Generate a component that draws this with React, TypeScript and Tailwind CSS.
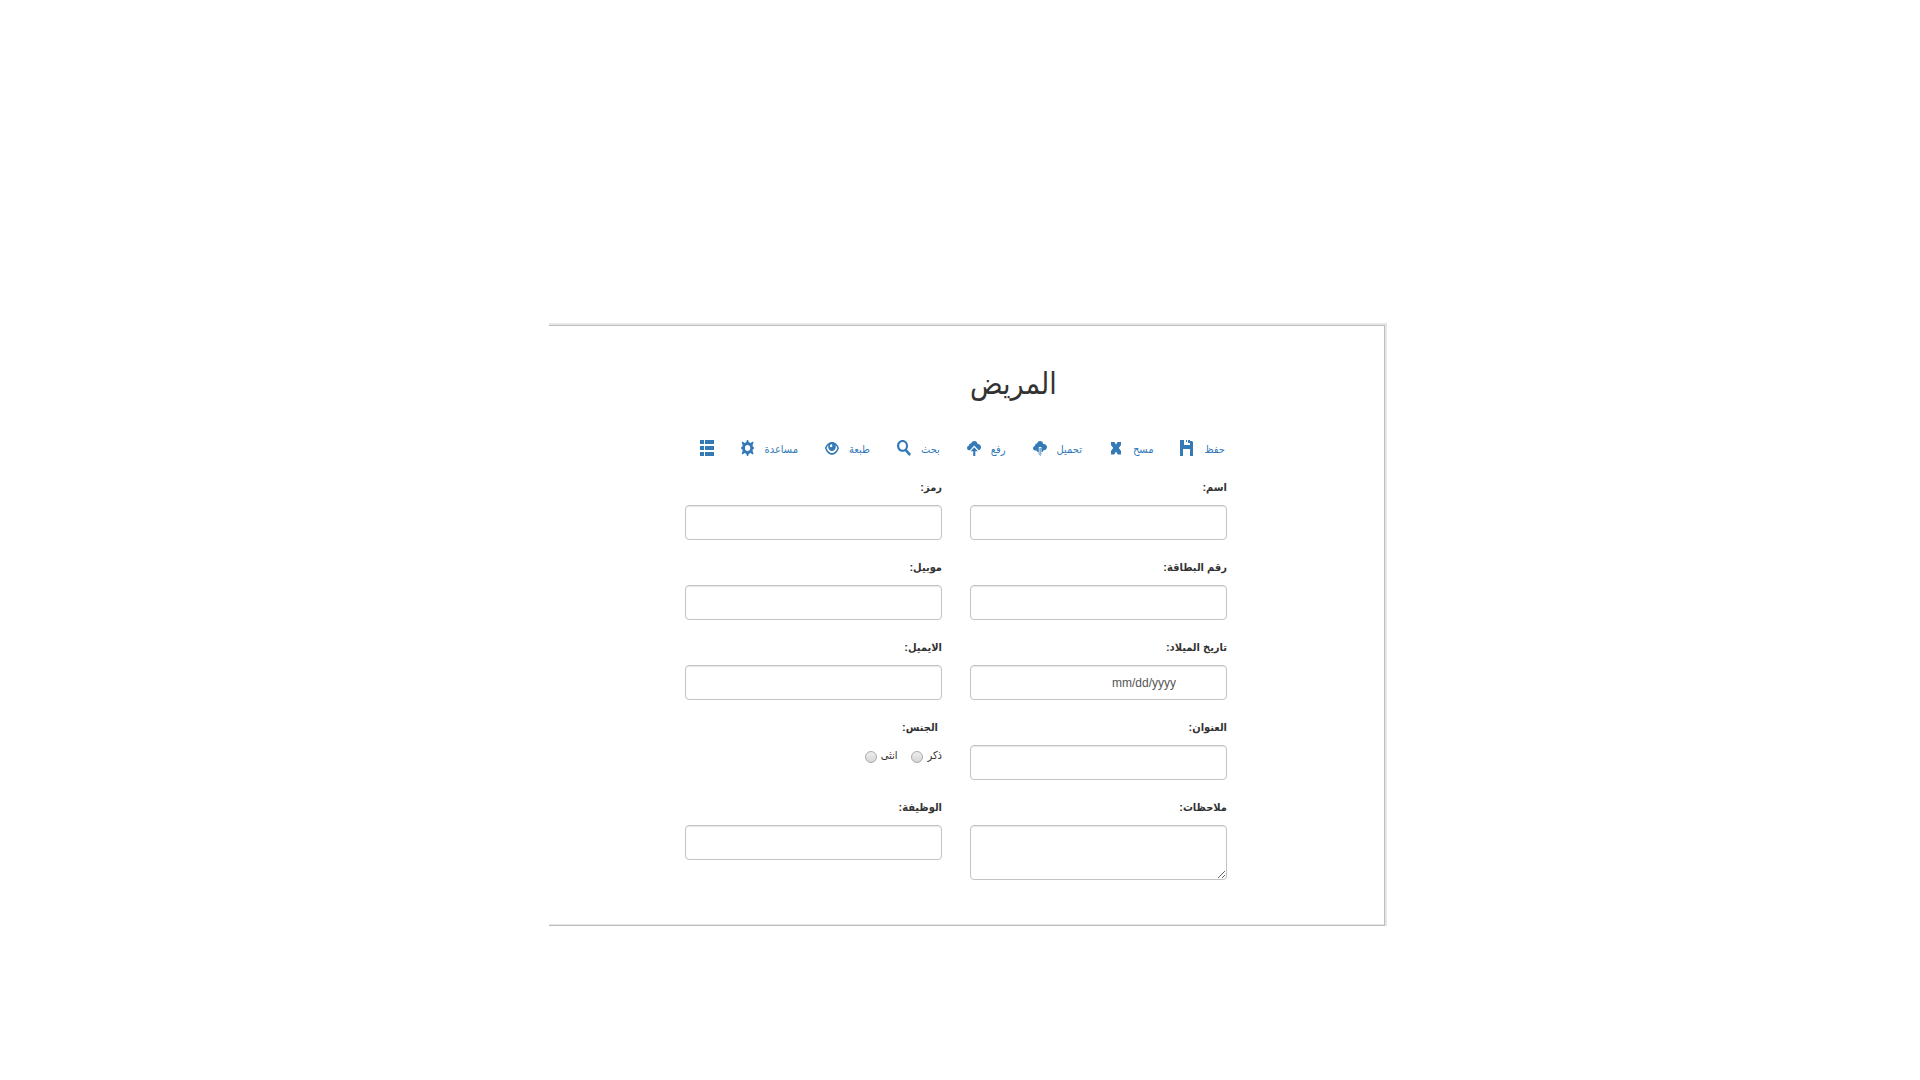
import type { ReactNode } from 'react';

const control =
  'block w-full rounded border border-[#c4c4c4] bg-white px-3 text-sm text-[#333] shadow-[inset_0_1px_1px_rgba(0,0,0,0.1)] outline-none focus:border-[#66afe9]';

function Glyph({ children }: { children: ReactNode }) {
  return (
    <svg viewBox="0 0 14 16" className="h-4 w-3.5 shrink-0" fill="currentColor" aria-hidden="true">
      {children}
    </svg>
  );
}

const tools: { label: string; icon: ReactNode }[] = [
  { label: 'حفظ', icon: <path d="M0 0h4v5h6V1h2l1 1v14h-3V9H3v7H0zM6 0h1v2H6zM8 0h2v3H8z" /> },
  { label: 'مسح', icon: <path d="M2 2h3.500L7 4.800 8.500 2H12v3L9.800 8l2.200 3v3.500H8.800L7 11.500 5.200 14.500H2V11l2.200-3L2 5z" /> },
  { label: 'تحميل', icon: <path fillRule="evenodd" d="M4 3.500C4.500 1.800 5.700 1 7 1c1.800 0 3 1.300 3.200 2.900C12.500 3.700 14 5.200 14 7c0 1.900-1.300 3.200-3 3.200h-.500L7.300 16 3.500 10.500H2.200C.9 10.300 0 9.400 0 8.200c0-1.300.9-2.200 2-2.300C1.900 4.500 2.800 3.500 4 3.500zM5.800 7v5H4.900l2.300 3 2.300-3H8.400V7z M6.600 8h1v6h-1z" /> },
  { label: 'رفع', icon: <path d="M4 3.500C4.700 1.800 6 1 7.300 1c2 0 3.200 1.400 3.300 3.100C12.800 4.200 14 5.600 14 7.300c0 1.600-.9 2.700-2.300 2.900L7.200 5.600 3 10.200H2C.8 9.900 0 9.100 0 8c0-1.200.8-2 1.900-2.200C1.900 4.400 2.700 3.500 4 3.500zM7.200 7.300l3.600 4H8.300V16H6.200v-4.700H3.700z" /> },
  { label: 'بحث', icon: <path fillRule="evenodd" d="M5.700 0C8.700 0 11 2.500 11 5.800c0 1.500-.3 2.600-1 3.600l4 4.600-1.700 2-4.200-4.800c-.7.400-1.500.6-2.400.600C2.600 11.800 0 9.200 0 5.900S2.600 0 5.700 0zm0 2C3.700 2 2.200 3.700 2.200 5.900s1.500 3.800 3.500 3.800S9 8.100 9 5.900 7.600 2 5.700 2z" /> },
  {
    label: 'طبعة',
    icon: <path fillRule="evenodd" d="M0 8.200C1.300 4.300 3.900 2 7 2s5.700 2.300 7 6.200C12.600 12 10.100 14.800 7 14.800S1.400 12 0 8.200zm1.600 0C2.800 11.100 4.700 13 7 13s4.200-1.900 5.400-4.800c-.5-1.300-1.200-2.300-2-3.100.3.700.4 1.200.4 2 0 2.300-1.700 4-3.800 4S3.200 9.400 3.200 7.100c0-.8.100-1.400.4-2-.9.700-1.500 1.800-2 3.100zM5 5.500c-.2 1 .1 1.700 1 1.700.9.100 1.400-.5 1.400-1.400C7.400 4.900 6.900 4.300 6.300 4.300 5.700 4.300 5.200 4.700 5 5.500z" />,
  },
  {
    label: 'مساعدة',
    icon: <path fillRule="evenodd" d="m6 0 1 0 1 2.300 1.500.6L12 1.500l.5 1-1 2.700.6 1.500L13 7.500v1l-.9.800-.6 1.500 1 2.700-.9 1-2.100-1.400-1.500.6L7 16H6l-.8-2.300-1.500-.6-2.200 1.400-.8-1 1-2.700-.6-1.500L0 8.500v-1l1.100-.8.6-1.500-1-2.700.8-1 2.200 1.400 1.500-.6zM6.600 5C5 5 3.900 6.300 3.900 8s1.100 3 2.700 3 2.700-1.300 2.700-3S8.200 5 6.600 5z" />,
  },
];

function Field({ id, label, children }: { id: string; label: string; children?: ReactNode }) {
  return (
    <div className="min-h-20">
      <label htmlFor={id} className="mb-2 block h-5 text-[11px] leading-5 font-bold">
        {label}:
      </label>
      {children ?? <input id={id} name={id} type="text" className={control + ' h-[35px]'} />}
    </div>
  );
}

function Choice({ id, label }: { id: string; label: string }) {
  return (
    <div className="flex items-center gap-1">
      <label htmlFor={id} className="text-[11px] leading-5">{label}</label>
      <input
        id={id}
        name="gender"
        type="radio"
        value={id}
        className="mt-1 size-3 appearance-none rounded-full border border-[#aaa] bg-linear-to-b from-[#eee] to-[#d6d6d6] checked:border-4 checked:border-[#337ab7]"
      />
    </div>
  );
}

export default function App() {
  return (
    <main
      dir="rtl"
      className="min-h-screen bg-white px-4 pt-[323px] pb-10 font-['Liberation_Sans','DejaVu_Sans_Condensed','DejaVu_Sans',sans-serif] text-[#333]"
    >
      <div className="mx-auto w-full max-w-[854px] pl-4">
        <section className="border-t-2 border-r-2 border-[#e6e6e6]">
          <form className="border-y border-r border-[#bdbdbd] pt-8 pr-[157px] pb-[45px] pl-[136px] shadow-[inset_0_-1px_0_#e6e6e6]">
            <div className="grid grid-cols-2 gap-7">
              <h1 className="text-left text-[30px] leading-[52px] font-normal">المريض</h1>
            </div>
            <nav className="mt-7 flex h-5 items-center gap-[27px] pr-0.5 text-[#337ab7]">
              {tools.map((tool) => (
                <a key={tool.label} href="#" className="flex items-center gap-2.5 text-[11px] leading-5 whitespace-nowrap">
                  <span className="pt-0.5">{tool.label}</span>
                  <Glyph>{tool.icon}</Glyph>
                </a>
              ))}
              <a href="#" aria-label="قائمة">
                <Glyph>
                  <path d="M0 0h4v4H0zM5 0h9v4H5zM0 6h4v4H0zM5 6h9v4H5zM0 12h4v4H0zM5 12h9v4H5z" />
                </Glyph>
              </a>
            </nav>
            <div className="mt-[19px] grid grid-cols-2 gap-x-7">
              <Field id="name" label="اسم" />
              <Field id="code" label="رمز" />
              <Field id="card" label="رقم البطاقة" />
              <Field id="mobile" label="موبيل" />
              <Field id="birth" label="تاريخ الميلاد">
                <input
                  id="birth"
                  name="birth"
                  type="text"
                  dir="ltr"
                  placeholder="mm/dd/yyyy"
                  className="block h-[35px] w-full rounded border border-[#c4c4c4] bg-white pr-[50px] pl-3 text-right text-xs shadow-[inset_0_1px_1px_rgba(0,0,0,0.1)] outline-none placeholder:text-[#555]"
                />
              </Field>
              <Field id="email" label="الايميل" />
              <Field id="address" label="العنوان" />
              <fieldset className="min-h-20">
                <legend className="mb-2 block h-5 pr-1 text-[11px] leading-5 font-bold">الجنس:</legend>
                <div className="flex items-center gap-3.5">
                  <Choice id="male" label="ذكر" />
                  <Choice id="female" label="انثى" />
                </div>
              </fieldset>
              <Field id="notes" label="ملاحظات">
                <textarea id="notes" name="notes" dir="ltr" className={control + ' h-[55px] resize'} />
              </Field>
              <Field id="job" label="الوظيفة" />
            </div>
          </form>
        </section>
      </div>
    </main>
  );
}
